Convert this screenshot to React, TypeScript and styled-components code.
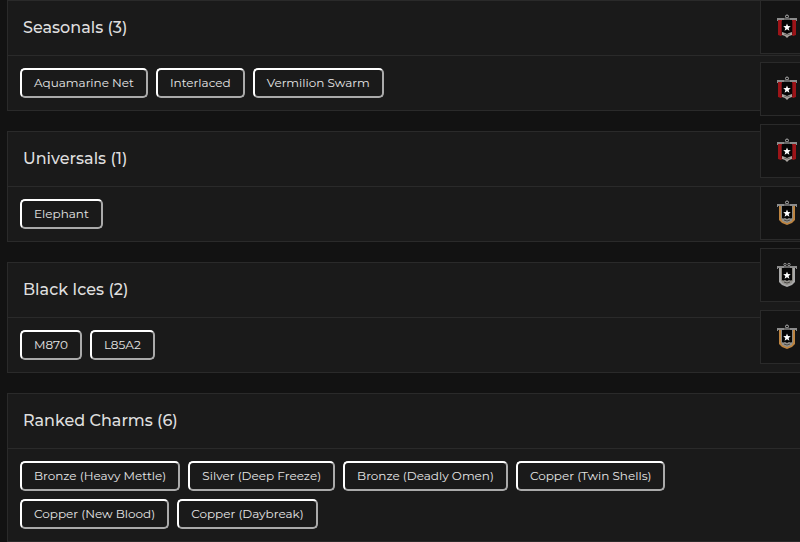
import React from "react";
import styled, { createGlobalStyle } from "styled-components";

const GlobalStyle = createGlobalStyle`
  *, *::before, *::after { box-sizing: border-box; }
  html, body { margin: 0; background: #121212; }
  body {
    color: #dedede;
    font-family: Montserrat, Inter, "Liberation Sans", sans-serif;
    overflow: hidden;
  }
`;

const Page = styled.main`
  position: relative;
  display: flex;
  flex-direction: column;
  gap: 20px;
  padding-left: 7px;
  overflow: hidden;
`;

const Panel = styled.section`
  background: #1a1a1a;
  border: 1px solid #2a2a2a;
  border-right: 0;
`;

const PanelHeader = styled.header`
  display: flex;
  align-items: center;
  height: 55px;
  padding: 0 15px;
  border-bottom: 1px solid #2a2a2a;
`;

const Title = styled.h2`
  margin: 0;
  font-size: 16px;
  font-weight: 500;
  line-height: 24px;
`;

const Chips = styled.div`
  display: flex;
  flex-wrap: wrap;
  gap: 8px;
  padding: 12px 100px 12px 12px;
`;

const Chip = styled.button`
  height: 30px;
  padding: 0 12px;
  border: 2px solid;
  border-color: #fff #aaa #aaa #fff;
  border-radius: 5px;
  background: transparent;
  color: #e6e6e6;
  font-family: inherit;
  font-size: 12px;
  line-height: 20px;
  white-space: nowrap;
`;

const CharmRail = styled.aside`
  position: absolute;
  top: 0;
  right: -14px;
  display: flex;
  flex-direction: column;
  gap: 8px;
`;

const CharmCard = styled.div`
  display: flex;
  align-items: center;
  justify-content: center;
  width: 54px;
  height: 54px;
  border: 1px solid #2a2a2a;
  background: #141414;
`;

type Tier = "copper" | "bronze" | "silver";

const sidePaint: Record<Tier, string> = {
  copper: "#9c1418",
  bronze: "#bd8440",
  silver: "#a9a9a9",
};

function CharmIcon({ tier }: { tier: Tier }) {
  const paint = sidePaint[tier];
  return (
    <svg width="22" height="28" viewBox="0 0 22 28" role="img" aria-label={`${tier} charm`}>
      {tier === "silver" ? (
        <g fill="none" stroke="#929292">
          <circle cx="9" cy="3.5" r="1.2" />
          <circle cx="13" cy="3.5" r="1.2" />
        </g>
      ) : (
        <circle cx="11" cy="3.5" r="1.5" fill="none" stroke="#b0b0b0" />
      )}
      {tier === "copper" ? (
        <>
          <path d="M3 7h16v14H3z" fill="#050505" />
          <path d="M2 7h4v15l-1 1-3-1zM16 7h4v15l-3 1-1-1z" fill={paint} />
          <path d="M5.5 8v13M16.5 8v13" stroke="#681014" />
          <path d="M6 19l3 1 2 1 2-1 3-1v3l-3 1-2 2-2-2-3-1z" fill="#aaa5a0" />
          <path d="M8 21l3 1 3-1" fill="none" stroke="#6b6865" />
        </>
      ) : (
        <>
          <path d="M3 7h16v14l-3 3-5 2-5-2-3-3z" fill={paint} />
          <path d="M5 7h12v13l-6 4-6-4z" fill="#8b8880" />
          <path d="M6 7h10v12l-5 3-5-3z" fill="#050505" />
          <path d="M6 20l3-1 2 1 2-1 3 1v2l-5 2-5-2z" fill="#93918c" />
          <path d="M8 21l3 1 3-1" fill="none" stroke="#4c4a47" />
        </>
      )}
      <path d="M1 5h20v3h-1V7H2v1H1z" fill="#8c8c8c" />
      <path d="M8 5h6v2H8z" fill="#666" />
      <path
        d="M11 10.5l1 2.6 2.8.1-2.2 1.800.8 2.700-2.400-1.500-2.400 1.500.8-2.700-2.200-1.800 2.800-.1z"
        fill="#fff"
      />
    </svg>
  );
}

const sections = [
  { title: "Seasonals", items: ["Aquamarine Net", "Interlaced", "Vermilion Swarm"] },
  { title: "Universals", items: ["Elephant"] },
  { title: "Black Ices", items: ["M870", "L85A2"] },
  {
    title: "Ranked Charms",
    items: [
      "Bronze (Heavy Mettle)",
      "Silver (Deep Freeze)",
      "Bronze (Deadly Omen)",
      "Copper (Twin Shells)",
      "Copper (New Blood)",
      "Copper (Daybreak)",
    ],
  },
];

const charms: Tier[] = ["copper", "copper", "copper", "bronze", "silver", "bronze"];

export default function App() {
  return (
    <>
      <GlobalStyle />
      <Page>
        {sections.map(({ title, items }) => (
          <Panel key={title}>
            <PanelHeader>
              <Title>{`${title} (${items.length})`}</Title>
            </PanelHeader>
            <Chips>
              {items.map((item) => (
                <Chip key={item} type="button">{item}</Chip>
              ))}
            </Chips>
          </Panel>
        ))}
        <CharmRail aria-label="Ranked charms">
          {charms.map((tier, index) => (
            <CharmCard key={index}>
              <CharmIcon tier={tier} />
            </CharmCard>
          ))}
        </CharmRail>
      </Page>
    </>
  );
}
